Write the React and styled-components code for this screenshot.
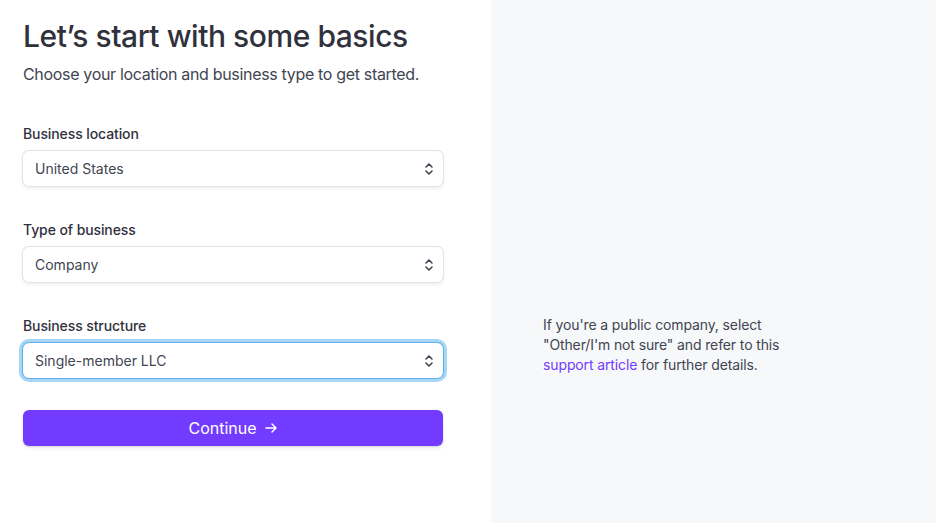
import React from 'react'
import styled, { createGlobalStyle } from 'styled-components'

const GlobalStyle = createGlobalStyle`
  html, body {
    margin: 0;
    padding: 0;
    height: 100%;
  }
  body {
    font-family: Inter, "Noto Sans", sans-serif;
    color: #30313d;
    -webkit-font-smoothing: antialiased;
  }
`

const fields = [
  { label: 'Business location', value: 'United States' },
  { label: 'Type of business', value: 'Company' },
  { label: 'Business structure', value: 'Single-member LLC', focused: true },
]

function Chevrons() {
  return (
    <svg width='10' height='14' viewBox='0 0 10 14' fill='none'>
      <path d='M2 5L5 2L8 5' stroke='#414552' strokeWidth='1.6' strokeLinecap='round' strokeLinejoin='round' />
      <path d='M2 9L5 12L8 9' stroke='#414552' strokeWidth='1.6' strokeLinecap='round' strokeLinejoin='round' />
    </svg>
  )
}

export default function App() {
  return (
    <Page>
      <GlobalStyle />
      <FormPanel>
        <Title>Let’s start with some basics</Title>
        <Subtitle>Choose your location and business type to get started.</Subtitle>

        <Fields>
          {fields.map((field) => (
            <Field key={field.label}>
              <Label>{field.label}</Label>
              <Select $focused={field.focused}>
                <span>{field.value}</span>
                <Chevrons />
              </Select>
            </Field>
          ))}
        </Fields>

        <ContinueButton>
          Continue
          <svg width='14' height='14' viewBox='0 0 14 14' fill='none'>
            <path d='M2 7H12M8 3L12 7L8 11' stroke='#fff' strokeWidth='1.5' strokeLinecap='round' strokeLinejoin='round' />
          </svg>
        </ContinueButton>
      </FormPanel>

      <HelpPanel>
        <HelpText>
          If you're a public company, select
          <br />
          "Other/I'm not sure" and refer to this
          <br />
          <HelpLink href='#'>support article</HelpLink> for further details.
        </HelpText>
      </HelpPanel>
    </Page>
  )
}

const Page = styled.div`
  display: grid;
  grid-template-columns: 491px 1fr;
  height: 523px;
  background: #fff;
`

const FormPanel = styled.div`
  display: flex;
  flex-direction: column;
  padding: 16px 48px 0 23px;
`

const Title = styled.h1`
  margin: 0;
  font-size: 30px;
  line-height: 40px;
  font-weight: 500;
  letter-spacing: -0.45px;
  color: #30313d;
`

const Subtitle = styled.p`
  margin: 6px 0 0;
  font-size: 16px;
  line-height: 24px;
  letter-spacing: -0.33px;
  color: #414552;
`

const Fields = styled.div`
  display: flex;
  flex-direction: column;
  gap: 36px;
  margin-top: 40px;
`

const Field = styled.div`
  display: flex;
  flex-direction: column;
  gap: 9px;
`

const Label = styled.label`
  font-size: 14px;
  line-height: 16px;
  font-weight: 500;
  letter-spacing: -0.1px;
  color: #30313d;
`

const Select = styled.div`
  display: flex;
  align-items: center;
  justify-content: space-between;
  height: 35px;
  box-sizing: border-box;
  padding: 0 9px 0 12px;
  border-radius: 6px;
  background: #fff;
  font-size: 14px;
  color: #414552;
  box-shadow: ${(p) =>
    p.$focused
      ? '0 0 0 1px #5fb0e8, 0 0 0 4px rgba(95, 180, 240, 0.55)'
      : '0 0 0 1px #e3e4e8, 0 2px 4px rgba(64, 68, 82, 0.12)'};
`

const ContinueButton = styled.button`
  display: flex;
  align-items: center;
  justify-content: center;
  gap: 7px;
  margin-top: 32px;
  height: 36px;
  width: 100%;
  border: 0;
  border-radius: 6px;
  background: #733aff;
  color: #fff;
  font-family: inherit;
  font-size: 16px;
  font-weight: 400;
  box-shadow: 0 1px 2px rgba(0, 0, 0, 0.12), 0 2px 5px rgba(60, 66, 87, 0.08);
  cursor: pointer;
`

const HelpPanel = styled.div`
  background: #f7f8fa;
  padding: 315px 40px 0 52px;
`

const HelpText = styled.p`
  margin: 0;
  font-size: 14px;
  line-height: 20px;
  letter-spacing: -0.12px;
  color: #414552;
`

const HelpLink = styled.a`
  color: #733aff;
  text-decoration: none;
`
